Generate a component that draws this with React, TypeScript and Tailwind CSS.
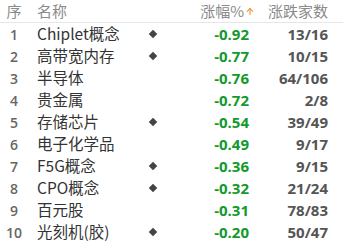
import { ArrowUp } from 'lucide-react';

interface Row {
  name: string;
  mark: boolean;
  change: string;
  count: string;
}

const rows: Row[] = [
  { name: 'Chiplet概念', mark: true, change: '-0.92', count: '13/16' },
  { name: '高带宽内存', mark: true, change: '-0.77', count: '10/15' },
  { name: '半导体', mark: false, change: '-0.76', count: '64/106' },
  { name: '贵金属', mark: false, change: '-0.72', count: '2/8' },
  { name: '存储芯片', mark: true, change: '-0.54', count: '39/49' },
  { name: '电子化学品', mark: false, change: '-0.49', count: '9/17' },
  { name: 'F5G概念', mark: true, change: '-0.36', count: '9/15' },
  { name: 'CPO概念', mark: true, change: '-0.32', count: '21/24' },
  { name: '百元股', mark: false, change: '-0.31', count: '78/83' },
  { name: '光刻机(胶)', mark: true, change: '-0.20', count: '50/47' },
];

const cjk = "font-['Microsoft_YaHei','Noto_Sans_CJK_SC',sans-serif]";
const num = "font-['Open_Sans','Noto_Sans',sans-serif]";

export default function App() {
  return (
    <div className={`w-[343px] h-[246px] bg-white overflow-hidden ${cjk}`}>
      <div className="flex items-center h-[23px] border-b border-[#e6e6e6] text-[15px] text-[#8a8a8a]">
        <div className="w-[28px] text-center">序</div>
        <div className="w-[121px] pl-[9px]">名称</div>
        <div className="w-[8px]" />
        <div className="w-[98px] flex items-center justify-end">
          涨幅%
          <ArrowUp className="w-[10px] h-[13px] text-[#f08a24] ml-[1px]" strokeWidth={2.5} />
        </div>
        <div className="w-[73px] text-right">涨跌家数</div>
      </div>
      {rows.map((row, i) => (
        <div key={i} className="flex items-center h-[22px]">
          <div className={`w-[28px] text-center text-[14px] font-semibold text-[#666] ${num}`}>{i + 1}</div>
          <div className="w-[121px] pl-[9px] text-[15.5px] text-[#333] whitespace-nowrap">{row.name}</div>
          <div className="w-[8px] flex items-center justify-center">
            {row.mark && <div className="w-[6px] h-[6px] bg-[#444] rotate-45" />}
          </div>
          <div className={`w-[92px] text-right text-[15px] font-bold text-[#129a2c] ${num}`}>{row.change}</div>
          <div className={`w-[79px] text-right text-[15px] font-bold text-[#555] ${num}`}>{row.count}</div>
        </div>
      ))}
    </div>
  );
}
